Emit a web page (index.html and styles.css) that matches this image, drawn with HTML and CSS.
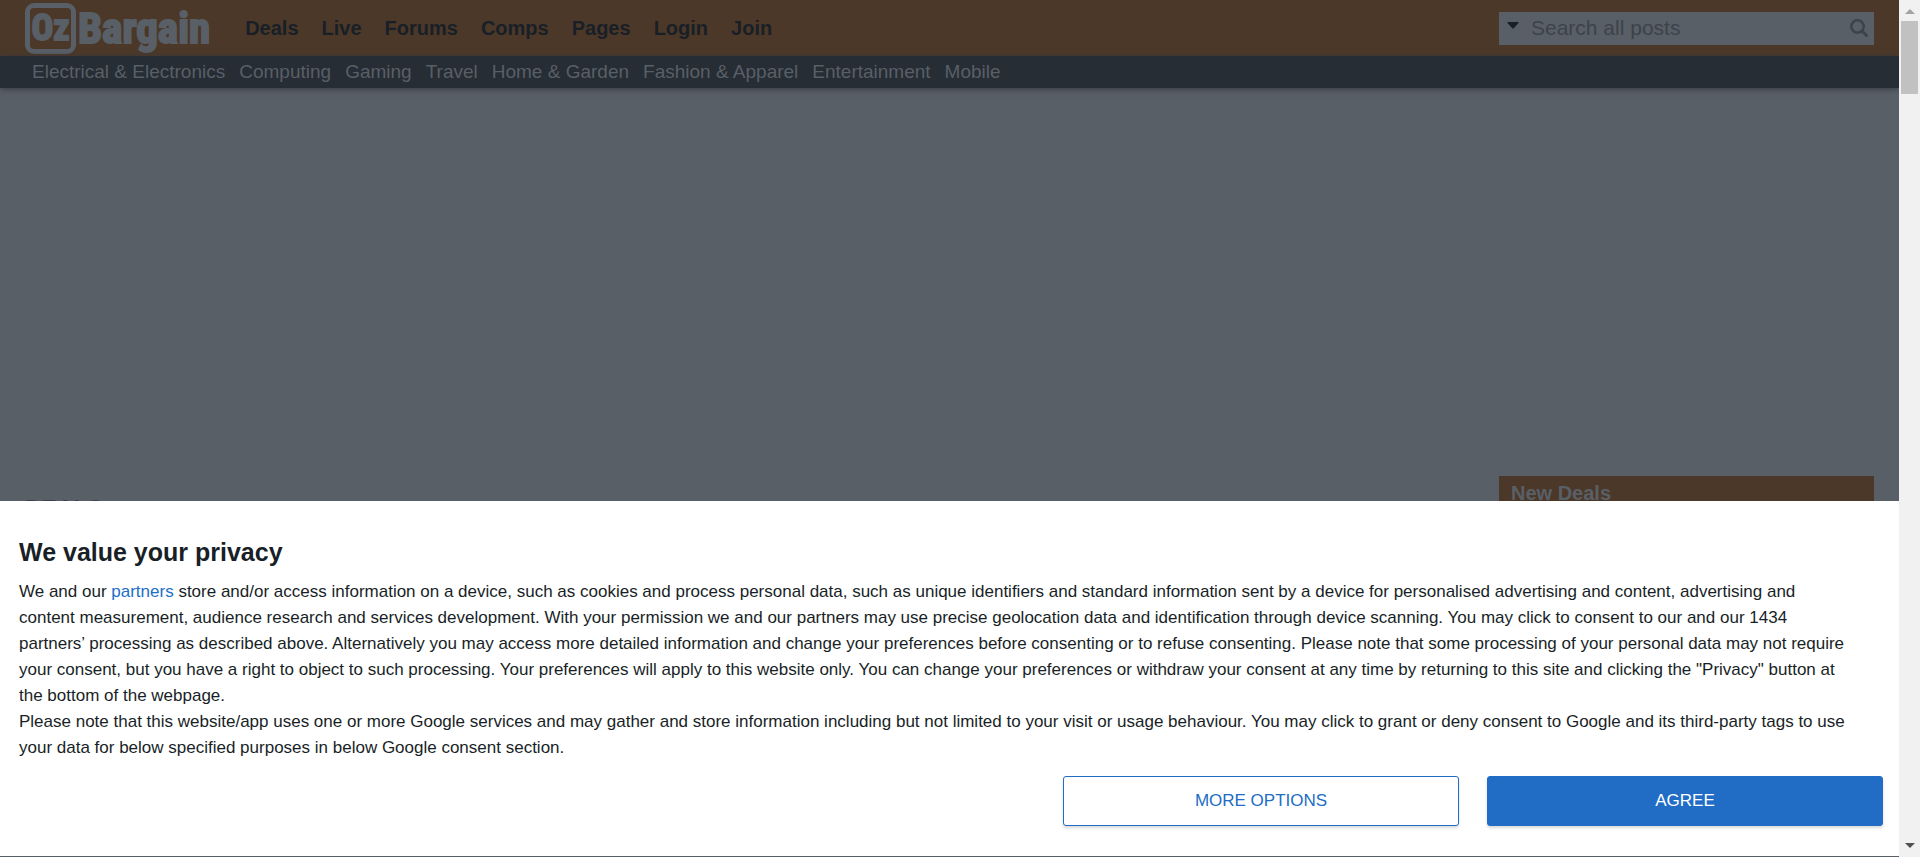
FILE: index.html
```html
<!DOCTYPE html>
<html lang="en">
<head>
<meta charset="utf-8">
<title>OzBargain</title>
<link rel="stylesheet" href="styles.css">
</head>
<body>
<div class="window">
  <div class="site">
    <header class="header">
      <a class="logo" href="#"><span class="logo-oz">Oz</span><span class="logo-bargain">Bargain</span></a>
      <nav class="main-nav">
        <a href="#">Deals</a>
        <a href="#">Live</a>
        <a href="#">Forums</a>
        <a href="#">Comps</a>
        <a href="#">Pages</a>
        <a href="#">Login</a>
        <a href="#">Join</a>
      </nav>
      <form class="search" role="search">
        <button class="search-scope" type="button" aria-label="Search scope">
          <svg width="12" height="7" viewBox="0 0 12 7"><path d="M1 0h10q1 0 .5 1L7 6q-1 1-2 0L.5 1Q0 0 1 0z" fill="#191f27"/></svg>
        </button>
        <input class="search-input" type="text" placeholder="Search all posts" aria-label="Search all posts">
        <button class="search-go" type="submit" aria-label="Search">
          <svg width="18" height="18" viewBox="0 0 18 18" fill="none" stroke="#3c434b"><circle cx="7.5" cy="7.5" r="6.2" stroke-width="2.6"/><path d="M12 12l4.5 4.5" stroke-width="3" stroke-linecap="round"/></svg>
        </button>
      </form>
    </header>
    <nav class="sub-nav">
      <a href="#">Electrical &amp; Electronics</a>
      <a href="#">Computing</a>
      <a href="#">Gaming</a>
      <a href="#">Travel</a>
      <a href="#">Home &amp; Garden</a>
      <a href="#">Fashion &amp; Apparel</a>
      <a href="#">Entertainment</a>
      <a href="#">Mobile</a>
    </nav>
    <main class="content">
      <h1 class="page-title">DEALS</h1>
      <aside class="sidebar"><h2 class="sidebar-title">New Deals</h2></aside>
    </main>
    <section class="consent" role="dialog" aria-labelledby="consent-title">
      <h2 class="consent-title" id="consent-title">We value your privacy</h2>
      <p class="consent-text">We and our <a href="#">partners</a> store and/or access information on a device, such as cookies and process personal data, such as unique identifiers and standard information sent by a device for personalised advertising and content, advertising and<br>
      content measurement, audience research and services development. With your permission we and our partners may use precise geolocation data and identification through device scanning. You may click to consent to our and our 1434<br>
      partners’ processing as described above. Alternatively you may access more detailed information and change your preferences before consenting or to refuse consenting. Please note that some processing of your personal data may not require<br>
      your consent, but you have a right to object to such processing. Your preferences will apply to this website only. You can change your preferences or withdraw your consent at any time by returning to this site and clicking the "Privacy" button at<br>
      the bottom of the webpage.<br>
      Please note that this website/app uses one or more Google services and may gather and store information including but not limited to your visit or usage behaviour. You may click to grant or deny consent to Google and its third-party tags to use<br>
      your data for below specified purposes in below Google consent section.</p>
      <div class="consent-actions">
        <button class="btn" type="button">MORE OPTIONS</button>
        <button class="btn btn-primary" type="button">AGREE</button>
      </div>
    </section>
  </div>
  <div class="scrollbar" aria-hidden="true">
    <svg width="10" height="5" viewBox="0 0 10 5"><path d="M0 5l5-5 5 5z" fill="#a3a3a3"/></svg>
    <div class="scroll-thumb"></div>
    <svg width="10" height="5" viewBox="0 0 10 5"><path d="M0 0h10L5 5z" fill="#505050"/></svg>
  </div>
</div>
</body>
</html>
```

FILE: styles.css
```css
* { box-sizing: border-box; }

body {
  margin: 0;
  font-family: "Liberation Sans", Arial, sans-serif;
  color: #191f27;
  overflow: hidden;
}

h1, h2, p { margin: 0; }
a { color: inherit; text-decoration: none; }
button, input { font-family: inherit; border: 0; padding: 0; background: none; }

.window {
  display: grid;
  grid-template-columns: 1fr 21px;
  height: 100vh;
}

.site {
  position: relative;
  display: flex;
  flex-direction: column;
  min-width: 0;
  background: #595f67;
  overflow: hidden;
}

.header {
  display: flex;
  align-items: center;
  flex: none;
  height: 56px;
  padding: 0 25px;
  background: #4c3828;
}

.logo {
  display: flex;
  align-items: center;
  gap: 2px;
  color: #595f67;
  font-family: Impact, "Roboto Condensed", "Open Sans Condensed", "Liberation Sans", sans-serif;
  font-weight: bold;
  line-height: 41px;
  -webkit-text-stroke: 2px #595f67;
}

.logo-oz {
  width: 51px;
  height: 51px;
  border: 5px solid #595f67;
  border-radius: 9px;
  font-size: 36px;
  text-align: center;
}

.logo-bargain { font-size: 43px; }

.main-nav {
  display: flex;
  gap: 23px;
  margin-left: 35px;
  font-size: 20px;
  font-weight: bold;
}

.search {
  display: flex;
  align-items: center;
  width: 375px;
  height: 33px;
  margin-left: auto;
  padding: 0 6px 0 8px;
  background: #595f67;
}

.search-scope { display: flex; padding-bottom: 6px; }
.search-go { display: flex; }

.search-input {
  flex: 1;
  min-width: 0;
  padding-left: 12px;
  font-size: 21px;
  color: #3c434b;
}

.search-input::placeholder { color: #3c434b; }

.sub-nav {
  display: flex;
  flex: none;
  gap: 14px;
  height: 32px;
  padding: 0 32px;
  background: #262d34;
  box-shadow: 0 1px 6px #33393f;
  color: #595f67;
  font-size: 19px;
  line-height: 32px;
}

.content {
  display: flex;
  justify-content: space-between;
  padding: 388px 25px 0;
}

.page-title {
  padding-top: 20px;
  font-size: 23px;
  line-height: 26px;
  color: #3d3f46;
}

.sidebar { width: 375px; }

.sidebar-title {
  padding: 0 12px;
  background: #4c3828;
  color: #595f67;
  font-size: 20px;
  line-height: 34px;
}

.consent {
  position: absolute;
  right: 0;
  bottom: 1px;
  left: 0;
  padding: 35px 0 30px 19px;
  background: #fff;
}

.consent-title {
  margin-bottom: 11px;
  font-size: 25px;
  line-height: 32px;
}

.consent-text {
  font-size: 17px;
  line-height: 26px;
}

.consent-text a { color: #216fc7; }

.consent-actions {
  display: flex;
  justify-content: flex-end;
  gap: 28px;
  margin-top: 15px;
  padding-right: 16px;
}

.btn {
  width: 396px;
  height: 50px;
  border: 1px solid #216dc5;
  border-radius: 3px;
  background: #fff;
  box-shadow: 0 2px 3px rgba(0, 0, 0, 0.15);
  color: #216dc5;
  font-size: 17px;
}

.btn-primary {
  background: #216dc5;
  color: #fff;
}

.scrollbar {
  display: flex;
  flex-direction: column;
  align-items: center;
  padding: 9px 0;
  background: #f1f1f1;
}

.scroll-thumb {
  width: 17px;
  height: 73px;
  margin: 7px 0 auto;
  background: #c1c1c1;
}
```
